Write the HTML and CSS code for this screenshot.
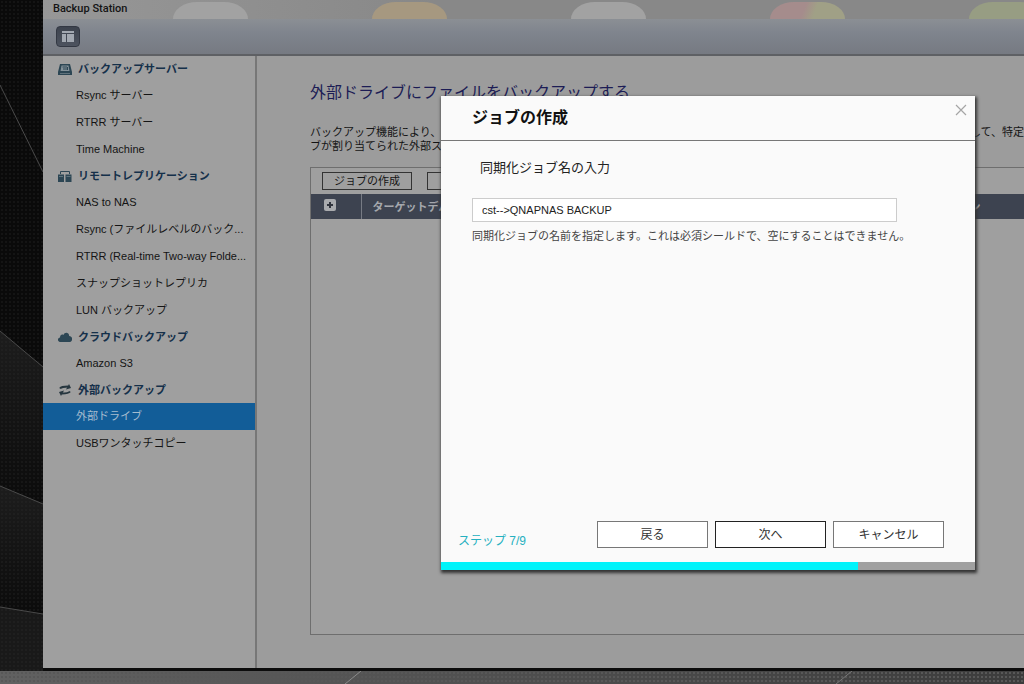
FILE: index.html
```html
<!DOCTYPE html>
<html lang="ja">
<head>
<meta charset="utf-8">
<title>Backup Station</title>
<link rel="stylesheet" href="styles.css">
</head>
<body>
<div class="desktop">
  <svg class="wallpaper" width="100%" height="100%" aria-hidden="true">
    <defs>
      <pattern id="dots" width="4" height="4" patternUnits="userSpaceOnUse"><circle cx="2" cy="2" r="1" fill="#2c2c2c"/></pattern>
      <linearGradient id="band" x2="0" y2="1"><stop offset="0" stop-color="#1d1d1d"/><stop offset="1" stop-color="#0b0b0b"/></linearGradient>
    </defs>
    <rect width="43" height="360" fill="#0a0a0a"/>
    <path d="M0 331L43 367V504L0 486Z" fill="url(#band)"/>
    <path d="M0 486L43 504V614L0 607Z" fill="url(#band)"/>
    <path d="M0 607L43 614V671H0Z" fill="#191919"/>
    <rect width="43" height="671" fill="url(#dots)" opacity=".4"/>
    <path d="M0 85L43 172M0 331L43 367M0 486L43 504M0 607L43 614" stroke="#4a4a4a" fill="none"/>
  </svg>
  <main class="window">
    <header class="titlebar">
      <h1 class="app-name">Backup Station</h1>
      <div class="ghosts"><i class="ghost"></i><i class="ghost orange"></i><i class="ghost"></i><i class="ghost pink"></i><i class="ghost green"></i></div>
    </header>
    <div class="toolbar">
      <button class="panel-button" aria-label="パネル">
        <svg width="12" height="11" viewBox="0 0 12 11"><path d="M0 0H12V11H0Z" fill="#a2a8b1"/><path d="M0 2.5H12M4.5 2V11" stroke="#424854"/></svg>
      </button>
    </div>
    <div class="body">
      <nav class="sidebar">
        <h2 class="group"><svg class="group-icon" viewBox="0 0 14 12"><path d="M2 1H12L14 9V12H0V9Z" fill="#2c4654"/><path d="M3.500 2.500H10.500L11.500 8H2.500Z" fill="#84929a"/><path d="M4.500 4H9M5 6H9.500M9.500 4V7" stroke="#2c4654"/><path d="M2 10.500H12" stroke="#6d7f88" stroke-width=".8"/></svg>バックアップサーバー</h2>
        <a class="item" href="#">Rsync サーバー</a>
        <a class="item" href="#">RTRR サーバー</a>
        <a class="item" href="#">Time Machine</a>
        <h2 class="group"><svg class="group-icon" viewBox="0 0 14 12"><path d="M2.500 4V1.500H11.500V4" fill="none" stroke="#2c4654"/><path d="M0 4.500H6V12H0ZM7.500 4.500H13.500V12H7.500Z" fill="#2c4654"/><path d="M1 6.500H5M8.500 6.500H12.500" stroke="#5d727c"/></svg>リモートレプリケーション</h2>
        <a class="item" href="#">NAS to NAS</a>
        <a class="item" href="#">Rsync (ファイルレベルのバック...</a>
        <a class="item" href="#">RTRR (Real-time Two-way Folde...</a>
        <a class="item" href="#">スナップショットレプリカ</a>
        <a class="item" href="#">LUN バックアップ</a>
        <h2 class="group"><svg class="group-icon" viewBox="0 0 14 12"><path d="M2 11C-1 10-.5 7 2 6.500C2 4 4 3 5.500 4C6.500 1 11 1 11.200 5C15 5.500 15 10 12 11Z" fill="#2c4654"/></svg>クラウドバックアップ</h2>
        <a class="item" href="#">Amazon S3</a>
        <h2 class="group"><svg class="group-icon" viewBox="0 0 14 12"><path d="M2 4.500C3.500 2.500 6 2.500 10 2.500M12 7.500C10.500 9.500 8 9.500 4 9.500" fill="none" stroke="#26363f" stroke-width="2"/><path d="M8 5.500L11 0L13 4ZM6 6.500L3 12L1 8Z" fill="#26363f"/></svg>外部バックアップ</h2>
        <a class="item active" href="#" aria-current="page">外部ドライブ</a>
        <a class="item" href="#">USBワンタッチコピー</a>
      </nav>
      <section class="content">
        <h2 class="page-title">外部ドライブにファイルをバックアップする</h2>
        <p class="intro"><span class="intro-row"><span>バックアップ機能により、NAS</span><span>して、特定</span></span><span class="intro-row">ブが割り当てられた外部ス</span></p>
        <div class="panel">
          <div class="actions"><button class="small-button">ジョブの作成</button><button class="small-button">編集</button></div>
          <table class="jobs">
            <thead><tr>
              <th class="expand"><svg width="12" height="12" viewBox="0 0 12 12"><rect width="12" height="12" rx="2" fill="#a9abae"/><path d="M6 3V9M3 6H9" stroke="#30343d" stroke-width="2"/></svg></th>
              <th class="target">ターゲットデバイス</th>
              <th class="action">アクション</th>
            </tr></thead>
          </table>
        </div>
      </section>
    </div>
  </main>
  <div class="dock"><svg class="dock-line" width="16" height="13" viewBox="0 0 16 13"><path d="M0 13L16 0" stroke="#8a8a8a"/></svg><svg class="dock-line" width="16" height="13" viewBox="0 0 16 13"><path d="M0 13L16 0" stroke="#777"/></svg></div>

  <form class="dialog" role="dialog" aria-labelledby="dialog-title">
    <header class="dialog-head">
      <h2 class="dialog-title" id="dialog-title">ジョブの作成</h2>
      <button class="close" type="button" aria-label="閉じる"><svg width="12" height="12" viewBox="0 0 12 12"><path d="M1 1L11 11M11 1L1 11" stroke="#a5a5a5" stroke-width="1.200"/></svg></button>
    </header>
    <div class="dialog-body">
      <label class="field-label" for="job">同期化ジョブ名の入力</label>
      <input class="field" id="job" type="text" value="cst--&gt;QNAPNAS BACKUP">
      <p class="hint">同期化ジョブの名前を指定します。これは必須シールドで、空にすることはできません。</p>
    </div>
    <footer class="dialog-foot">
      <span class="step">ステップ 7/9</span>
      <button class="button" type="button">戻る</button>
      <button class="button primary" type="button">次へ</button>
      <button class="button" type="button">キャンセル</button>
    </footer>
    <div class="progress"><div class="progress-fill" style="width:78%"></div></div>
  </form>
</div>
</body>
</html>
```
FILE: styles.css
```css
* { box-sizing: border-box; }
body { margin: 0; font: 11px/14px "Liberation Sans", "Noto Sans CJK JP", sans-serif; color: #141414; }
h1, h2, p { margin: 0; }
button, input { font: inherit; color: inherit; padding: 0; border-radius: 0; }

.desktop { position: relative; display: flex; flex-direction: column; height: 100vh; background: #0c0c0c; overflow: hidden; }
.wallpaper { position: absolute; left: 0; top: 0; }
.window { position: relative; flex: 1; min-height: 0; margin-left: 43px; margin-bottom: 3px; display: flex; flex-direction: column; background: #9f9f9f; }

.titlebar { position: relative; height: 19px; flex: none; padding: 2px 10px; background: linear-gradient(90deg, #979797, #888 40%); }
.app-name { font: 500 11px/14px Roboto, sans-serif; color: #141414; }
.ghosts { position: absolute; left: 130px; top: 2px; display: flex; gap: 124px; }
.ghost { flex: none; width: 75px; height: 17px; border-radius: 24px 24px 0 0 / 17px 17px 0 0; background: #a2a2a2; }
.orange { background: #a69880; }
.pink { background: linear-gradient(110deg, #a58c8c 45%, #a0a086 60%); }
.green { background: #979d83; }

.toolbar { flex: none; height: 37px; padding: 7px 13px; background: linear-gradient(#8b8f94, #7f848d 40%, #767a82); border-bottom: 2px solid #5e6064; }
.panel-button { display: flex; align-items: center; justify-content: center; width: 24px; height: 21px; border: 1px solid #333843; border-radius: 4px; background: linear-gradient(#3d434e, #4d535f); }

.body { flex: 1; min-height: 0; display: flex; }
.sidebar { flex: none; width: 214px; border-right: 2px solid #777; }
.group { display: flex; align-items: center; gap: 6px; height: 26px; padding-left: 15px; font-size: 11px; font-weight: bold; color: #15304a; }
.group-icon { width: 14px; height: 12px; flex: none; }
.item { display: block; height: 27px; padding-left: 33px; line-height: 27px; color: #141414; text-decoration: none; white-space: nowrap; }
.active { background: #125d98; color: #a5bccf; }

.content { flex: 1; min-width: 0; display: flex; flex-direction: column; padding: 25px 0 33px 53px; background: #9c9c9c; }
.page-title { font-size: 16px; line-height: 24px; font-weight: normal; color: #1c1c55; }
.intro { margin: 20px 0 14px; }
.intro-row { display: flex; justify-content: space-between; white-space: nowrap; }
.panel { flex: 1; margin-right: -1px; border: 1px solid #6e6e6e; background: #9f9f9f; }
.actions { display: flex; gap: 15px; padding: 4px 11px; }
.small-button { width: 90px; height: 18px; border: 1px solid #333; background: transparent; line-height: 14px; }
.jobs { width: 100%; border-collapse: collapse; table-layout: fixed; background: #3d4350; color: #a5a8ad; }
.jobs th { height: 25px; padding: 0 0 0 11px; text-align: left; font-weight: bold; }
.jobs .expand { width: 50px; padding: 0 0 4px 13px; border-right: 1px solid #777b84; line-height: 0; }
.jobs .action { width: 98px; padding-left: 0; }

.dock { position: relative; flex: none; height: 13px; display: flex; justify-content: space-between; padding: 0 172px 0 345px; background: radial-gradient(circle, #585858 1px, transparent 1px) 0 0 / 4px 4px, linear-gradient(90deg, #616161, #3c3c3c); }
.dock-line { flex: none; }

.dialog { position: absolute; left: 441px; top: 96px; width: 534px; height: 474px; display: flex; flex-direction: column; background: #fafafa; box-shadow: 1px 2px 3px 1px #333; }
.dialog-head { flex: none; display: flex; justify-content: space-between; align-items: flex-start; height: 45px; padding: 8px 8px 0 31px; border-bottom: 1px solid #777; }
.dialog-title { font-size: 16px; line-height: 28px; color: #111; }
.close { width: 12px; height: 12px; border: 0; background: none; line-height: 0; }
.dialog-body { flex: 1; padding: 17px 31px; }
.field-label { display: block; padding-left: 8px; font-size: 13px; line-height: 20px; color: #222; }
.field { display: block; width: 425px; height: 24px; margin-top: 20px; padding: 0 9px; border: 1px solid #ccc; background: #fff; color: #222; }
.hint { margin-top: 6px; line-height: 16px; color: #444; white-space: nowrap; }
.dialog-foot { flex: none; display: flex; gap: 7px; padding: 0 31px 14px 17px; }
.step { flex: 1; align-self: flex-end; font-size: 12px; line-height: 14px; color: #25b0c0; }
.button { width: 111px; height: 27px; border: 1px solid #777; background: #fff; font-size: 12px; color: #333; }
.primary { border-color: #222; }
.progress { flex: none; height: 8px; background: #a0a0a0; }
.progress-fill { height: 100%; background: #00f3fa; }
```
